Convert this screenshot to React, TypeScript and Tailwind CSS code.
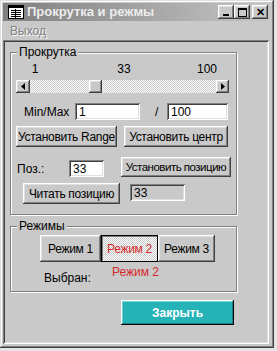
import React from "react";

const raised =
  "shadow-[inset_-1px_-1px_0_#404040,inset_1px_1px_0_#ffffff,inset_-2px_-2px_0_#808080,inset_2px_2px_0_#dfdfdf]";
const sunken =
  "shadow-[inset_1px_1px_0_#808080,inset_-1px_-1px_0_#ffffff,inset_2px_2px_0_#404040,inset_-2px_-2px_0_#dfdfdf]";
const checker =
  "bg-[repeating-conic-gradient(#ffffff_0%_25%,#c9c9c9_0%_50%)] bg-[length:2px_2px]";

function Btn({ w, h, children, className = "" }: { w: string; h: string; children: React.ReactNode; className?: string }) {
  return (
    <div className={`flex shrink-0 items-center justify-center whitespace-nowrap bg-[#c9c9c9] ${raised} ${w} ${h} ${className}`}>
      {children}
    </div>
  );
}

function Field({ w, h, value, gray = false, className = "" }: { w: string; h: string; value: string; gray?: boolean; className?: string }) {
  return (
    <div className={`flex shrink-0 items-center pl-[4px] ${gray ? "bg-[#c9c9c9]" : "bg-white"} ${sunken} ${w} ${h} ${className}`}>
      {value}
    </div>
  );
}

function Arrow({ dir }: { dir: "left" | "right" }) {
  return (
    <svg width="4" height="7" viewBox="0 0 4 7">
      {dir === "left" ? <polygon points="4,0 4,7 0,3.5" fill="#000" /> : <polygon points="0,0 0,7 4,3.5" fill="#000" />}
    </svg>
  );
}

function TitleBtn({ children }: { children: React.ReactNode }) {
  return <div className={`flex h-[14px] w-[16px] items-center justify-center bg-[#c9c9c9] ${raised}`}>{children}</div>;
}

function Group({ label, h, className = "", children }: { label: string; h: string; className?: string; children: React.ReactNode }) {
  return (
    <div className={`relative ml-[5px] w-[227px] border border-[#808080] shadow-[1px_1px_0_#ffffff,inset_1px_1px_0_#ffffff] ${h} ${className}`}>
      <span className="absolute top-[-8px] left-[6px] bg-[#c9c9c9] px-[2px] leading-[14px]">{label}</span>
      {children}
    </div>
  );
}

export default function App() {
  return (
    <div className="h-[351px] w-[277px] bg-[#e4e4e4] font-['Liberation_Sans',Arial,sans-serif] text-[12px] leading-[14px] text-black">
      <div className="flex h-[348px] w-[274px] flex-col bg-[#c9c9c9] p-[3px] shadow-[inset_-1px_-1px_0_#404040,inset_1px_1px_0_#dfdfdf,inset_-2px_-2px_0_#808080,inset_2px_2px_0_#ffffff]">
        {/* title bar */}
        <div className="flex h-[18px] items-center bg-gradient-to-r from-[#808080] to-[#c6c6c6] pr-[3px] pl-[5px]">
          <svg width="16" height="14" viewBox="0 0 16 14">
            <rect x="0.5" y="0.5" width="15" height="13" fill="#fff" stroke="#000" />
            <rect x="1" y="1" width="14" height="2" fill="#000" />
            <rect x="3" y="5" width="10" height="1" fill="#000" />
            <rect x="3" y="7" width="10" height="1" fill="#000" />
            <rect x="3" y="9" width="10" height="1" fill="#000" />
            <rect x="3" y="11" width="10" height="1" fill="#000" />
            <rect x="7" y="4" width="1" height="9" fill="#000" />
          </svg>
          <span className="ml-[3px] text-[13px] font-bold text-[#ececec]">Прокрутка и режмы</span>
          <div className="ml-auto flex items-center">
            <TitleBtn>
              <div className="mt-[6px] h-[2px] w-[6px] bg-black" />
            </TitleBtn>
            <TitleBtn>
              <div className="h-[9px] w-[9px] border border-t-2 border-black" />
            </TitleBtn>
            <div className="w-[2px]" />
            <TitleBtn>
              <span className="text-[11px] leading-[11px] font-bold">✕</span>
            </TitleBtn>
          </div>
        </div>
        {/* menu */}
        <div className="flex h-[19px] items-center pl-[7px] text-[#808080] [text-shadow:1px_1px_0_#ffffff]">Выход</div>
        {/* panel */}
        <div className="mr-[2px] mb-[1px] flex flex-1 flex-col pt-[2px] pl-[2px] shadow-[inset_1px_1px_0_#808080,inset_-1px_-1px_0_#ffffff,inset_2px_2px_0_#404040,inset_-2px_-2px_0_#dfdfdf]">
          <Group label="Прокрутка" h="h-[163px]" className="mt-[10px]">
            <div className="mt-[9px] flex h-[14px]">
              <span className="ml-[14px] w-[20px] text-center">1</span>
              <span className="ml-[59px] w-[40px] text-center">33</span>
              <span className="ml-[43px] w-[40px] text-center">100</span>
            </div>
            <div className={`mt-[4px] ml-[5px] flex h-[13px] w-[213px] ${checker}`}>
              <Btn w="w-[14px]" h="h-[13px]">
                <Arrow dir="left" />
              </Btn>
              <div className="w-[59px]" />
              <Btn w="w-[13px]" h="h-[13px]">
                {null}
              </Btn>
              <div className="flex-1" />
              <Btn w="w-[13px]" h="h-[13px]">
                <Arrow dir="right" />
              </Btn>
            </div>
            <div className="mt-[10px] flex h-[17px] items-center">
              <span className="ml-[13px] w-[51px]">Min/Max</span>
              <Field w="w-[65px]" h="h-[17px]" value="1" />
              <span className="w-[27px] pl-[15px]">/</span>
              <Field w="w-[61px]" h="h-[17px]" value="100" />
            </div>
            <div className="mt-[6px] flex tracking-[-0.3px]">
              <Btn w="w-[101px]" h="h-[21px]" className="ml-[5px]">
                Установить Range
              </Btn>
              <Btn w="w-[104px]" h="h-[21px]" className="ml-[7px]">
                Установить центр
              </Btn>
            </div>
            <div className="mt-[10px] flex items-start">
              <span className="ml-[6px] w-[52px] pt-[5px]">Поз.:</span>
              <Field w="w-[35px]" h="h-[17px]" value="33" className="mt-[3px]" />
              <Btn w="w-[110px]" h="h-[20px]" className="ml-[17px] text-[11.5px] tracking-[-0.5px]">
                Установить позицию
              </Btn>
            </div>
            <div className="mt-[6px] flex items-start">
              <Btn w="w-[97px]" h="h-[21px]" className="ml-[12px] tracking-[-0.3px]">
                Читать позицию
              </Btn>
              <Field w="w-[55px]" h="h-[17px]" value="33" gray className="mt-[1px] ml-[10px]" />
            </div>
          </Group>
          <Group label="Режимы" h="h-[66px]" className="mt-[11px]">
            <div className="mt-[8px] ml-[29px] flex tracking-[-0.3px]">
              <Btn w="w-[61px]" h="h-[27px]">
                Режим 1
              </Btn>
              <div className={`flex h-[27px] w-[57px] shrink-0 items-center justify-center whitespace-nowrap border border-black text-[#d42a2a] shadow-[inset_1px_1px_0_#808080] ${checker}`}>
                Режим 2
              </div>
              <Btn w="w-[57px]" h="h-[27px]">
                Режим 3
              </Btn>
            </div>
            <div className="mt-[3px] flex items-start">
              <span className="ml-[33px] w-[68px] pt-[6px]">Выбран:</span>
              <span className="text-[#d42a2a]">Режим 2</span>
            </div>
          </Group>
          <div className="mt-[8px] ml-[116px] flex h-[25px] w-[113px] items-center justify-center bg-[#26b3b8] font-bold text-white shadow-[inset_-1px_-1px_0_#000000,inset_1px_1px_0_#ffffff,inset_-2px_-2px_0_#1a7f82,inset_2px_2px_0_#6fd4d6]">
            Закрыть
          </div>
        </div>
      </div>
    </div>
  );
}
